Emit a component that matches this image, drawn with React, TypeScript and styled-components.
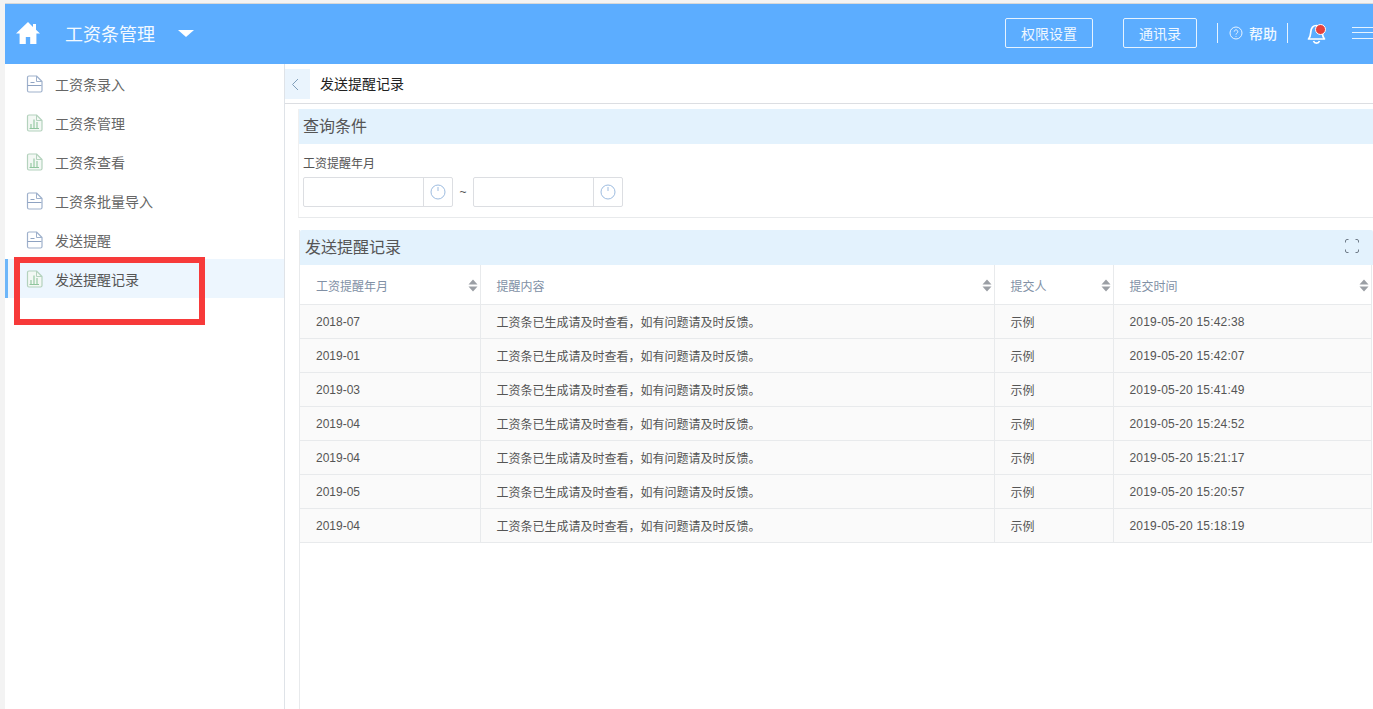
import React from "react";
import styled, { createGlobalStyle } from "styled-components";

const Global = createGlobalStyle`
  html, body { margin: 0; padding: 0; height: 100%; overflow: hidden; background: #fff; }
  body { font-family: "Liberation Sans", "Noto Sans CJK SC", sans-serif; }
  * { box-sizing: border-box; }
`;

const Page = styled.div`
  position: relative;
  width: 1373px;
  height: 709px;
  overflow: hidden;
  padding: 3px 0 0 5px;
  background: #f3f3f3;
  display: flex;
  flex-direction: column;
`;
const Header = styled.header`
  height: 61px;
  flex: none;
  background: #5cadff;
  border-top: 1px solid #d8d8d8;
  color: #fff;
  display: flex;
  align-items: center;
  padding: 0 0 2px 10px;
`;
const AppTitle = styled.span`
  font-size: 18px;
  margin-left: 24px;
  width: 112px;
  color: #f4faff;
`;
const Caret = styled.span`
  width: 0;
  height: 0;
  border-left: 8px solid transparent;
  border-right: 8px solid transparent;
  border-top: 7px solid #fff;
  margin-left: 1px;
`;
const Spacer = styled.div`
  flex: 1;
`;
const HeadButton = styled.button<{ $w: number; $mr: number }>`
  width: ${(p) => p.$w}px;
  height: 30px;
  margin-right: ${(p) => p.$mr}px;
  border: 1px solid #e6f3ff;
  border-radius: 2px;
  background: transparent;
  color: #f0f8ff;
  font: 14px "Liberation Sans", "Noto Sans CJK SC", sans-serif;
  padding: 0;
`;
const Rule = styled.span`
  width: 1px;
  height: 20px;
  background: #e6f3ff;
`;
const Help = styled.span`
  display: flex;
  align-items: center;
  gap: 6px;
  width: 69px;
  padding-left: 11px;
  font-size: 14px;
  font-weight: 500;
  color: #f0f8ff;
`;
const BellWrap = styled.span`
  position: relative;
  width: 19px;
  height: 20px;
  margin: 2px 26px 0 19px;
  display: block;
`;
const Dot = styled.span`
  position: absolute;
  top: 0;
  right: 0;
  width: 11px;
  height: 11px;
  border-radius: 50%;
  background: #e5413d;
  border: 1.5px solid #fff;
`;
const Burger = styled.span`
  width: 21px;
  height: 12px;
  flex: none;
  border-top: 1px solid #e6f3ff;
  border-bottom: 1px solid #e6f3ff;
  position: relative;
  &::after {
    content: "";
    position: absolute;
    left: 0;
    right: 0;
    top: 4px;
    height: 1px;
    background: #e6f3ff;
  }
`;
const Body = styled.div`
  flex: 1;
  min-height: 0;
  display: flex;
  background: #fff;
`;
const Sidebar = styled.nav`
  width: 280px;
  flex: none;
  border-right: 1px solid #dfe3e8;
  background: #fff;
`;
const MenuItem = styled.div<{ $active?: boolean }>`
  height: 39px;
  display: flex;
  align-items: center;
  padding: 1px 0 0 ${(p) => (p.$active ? 18 : 21)}px;
  gap: 12px;
  font-size: 14px;
  color: ${(p) => (p.$active ? "#555" : "#666")};
  background: ${(p) => (p.$active ? "#edf6fe" : "transparent")};
  border-left: ${(p) => (p.$active ? "3px solid #6db6f9" : "none")};
`;
const Main = styled.main`
  flex: 1;
  min-width: 0;
  display: flex;
  flex-direction: column;
`;
const Crumb = styled.div`
  height: 40px;
  flex: none;
  border-bottom: 1px solid #dcdee2;
  display: flex;
  align-items: center;
  gap: 10px;
  padding-bottom: 2px;
  font-size: 14px;
  color: #222;
`;
const Back = styled.span`
  width: 25px;
  height: 30px;
  margin-top: 5px;
  padding-right: 5px;
  align-self: flex-start;
  background: #eaf4fd;
  display: flex;
  align-items: center;
  justify-content: center;
`;
const QueryPanel = styled.section`
  margin: 5px 0 0 13px;
  height: 109px;
  flex: none;
  border-left: 1px solid #f0f0f0;
  border-bottom: 1px solid #e8eaec;
`;
const PanelHead = styled.div`
  height: 35px;
  background: #e3f2fd;
  display: flex;
  align-items: center;
  justify-content: space-between;
  padding-bottom: 3px;
  font-size: 16px;
  color: #555;
`;
const QueryHead = styled(PanelHead)`
  padding-left: 4px;
`;
const FieldLabel = styled.div`
  font-size: 12px;
  line-height: 16px;
  color: #555;
  margin: 12px 0 5px 4px;
`;
const RangeRow = styled.div`
  display: flex;
  align-items: center;
  margin-left: 4px;
`;
const DateBox = styled.div`
  width: 150px;
  height: 30px;
  border: 1px solid #dcdee2;
  border-radius: 2px;
  display: flex;
  justify-content: flex-end;
`;
const DateAddon = styled.span`
  width: 29px;
  border-left: 1px solid #dcdee2;
  display: flex;
  align-items: center;
  justify-content: center;
`;
const Tilde = styled.span`
  width: 20px;
  text-align: center;
  font-size: 12px;
  color: #555;
`;
const RecordPanel = styled.section`
  margin: 12px 0 0 14px;
  flex: 1;
  min-height: 0;
  border-left: 1px solid #e8eaec;
  display: flex;
  flex-direction: column;
`;
const RecordHead = styled(PanelHead)`
  padding: 0 14px 3px 5px;
  border-radius: 2px 2px 0 0;
  flex: none;
`;
const Table = styled.table`
  width: 1071px;
  border-collapse: collapse;
  table-layout: fixed;
  font-size: 12px;
`;
const Th = styled.th`
  height: 39px;
  padding: 2px 0 0 16px;
  font-weight: 400;
  text-align: left;
  color: #8190a5;
  background: #fff;
  border-bottom: 1px solid #e8eaec;
  border-right: 1px solid #e8eaec;
`;
const ThInner = styled.span`
  display: flex;
  align-items: center;
  justify-content: space-between;
  padding-right: 2px;
`;
const Td = styled.td`
  height: 34px;
  padding: 1px 0 0 16px;
  color: #555;
  background: #fafafa;
  border-bottom: 1px solid #e8eaec;
  border-right: 1px solid #e8eaec;
  white-space: nowrap;
`;
const Stamp = styled.span`
  letter-spacing: 0.2px;
`;
const Highlight = styled.div`
  position: absolute;
  left: 14px;
  top: 257px;
  width: 191px;
  height: 68px;
  border: 6px solid #f73a3a;
  pointer-events: none;
`;

const DocIcon = ({ chart }: { chart?: boolean }) => (
  <svg width="17" height="18" viewBox="0 0 17 18" fill="none">
    <path
      d="M3 1h7.500L16 6.500V15.500a1.500 1.500 0 0 1-1.500 1.500H3a1.500 1.500 0 0 1-1.500-1.500V2.500A1.500 1.500 0 0 1 3 1z"
      stroke={chart ? "#b4d2bd" : "#9fb1cc"}
      strokeWidth="1.2"
      strokeLinejoin="round"
      fill={chart ? "#f3f8f4" : "none"}
    />
    <path d="M10.500 1v5.500H16" stroke={chart ? "#b4d2bd" : "#9fb1cc"} strokeWidth="1" />
    {chart ? (
      <path d="M5 14V10M8 14V5.500M11 14V8M3.500 14.500h9.500" stroke="#8fc59d" strokeWidth="1.1" />
    ) : (
      <path d="M1.500 10.500h14M4.500 7.500h4" stroke="#8fa3c2" strokeWidth="1.1" />
    )}
  </svg>
);
const Clock = () => (
  <svg width="16" height="16" viewBox="0 0 16 16" fill="none">
    <circle cx="8" cy="8" r="7" stroke="#9dbce0" strokeWidth="1" />
    <path d="M8 3V7" stroke="#9dbce0" strokeWidth="1" />
  </svg>
);
const Sort = () => (
  <svg width="10" height="13" viewBox="0 0 10 13">
    <path d="M5 0.500L9.500 5.500H0.500Z M5 12.500L0.500 7.500H9.500Z" fill="#9b9fa5" />
  </svg>
);

const menu: [string, boolean][] = [
  ["工资条录入", false],
  ["工资条管理", true],
  ["工资条查看", true],
  ["工资条批量导入", false],
  ["发送提醒", false],
  ["发送提醒记录", true],
];
const rows = [
  ["2018-07", "2019-05-20 15:42:38"],
  ["2019-01", "2019-05-20 15:42:07"],
  ["2019-03", "2019-05-20 15:41:49"],
  ["2019-04", "2019-05-20 15:24:52"],
  ["2019-04", "2019-05-20 15:21:17"],
  ["2019-05", "2019-05-20 15:20:57"],
  ["2019-04", "2019-05-20 15:18:19"],
];

export default function App() {
  return (
    <Page>
      <Global />
      <Header>
        <svg width="26" height="24" viewBox="0 0 26 24">
          <path d="M13 1L1 12.500h3.600V23h6.200v-7h4.400v7h6.200V12.500H25L21 8.700V3h-3v2.900z" fill="#fff" />
        </svg>
        <AppTitle>工资条管理</AppTitle>
        <Caret />
        <Spacer />
        <HeadButton $w={88} $mr={30}>权限设置</HeadButton>
        <HeadButton $w={74} $mr={20}>通讯录</HeadButton>
        <Rule />
        <Help>
          <svg width="14" height="14" viewBox="0 0 14 14" fill="none">
            <circle cx="7" cy="7" r="6" stroke="#e6f3ff" />
            <path d="M5.200 5.600a1.800 1.800 0 1 1 2.700 1.600c-.6.400-.9.700-.9 1.400M7 10v.8" stroke="#e6f3ff" />
          </svg>
          帮助
        </Help>
        <Rule />
        <BellWrap>
          <svg width="19" height="20" viewBox="0 0 19 20" fill="none">
            <path
              d="M1.500 15c2-2 2-3.500 2.300-7C4.100 4 6.500 1.500 9.500 1.500s5.400 2.500 5.700 6.500c.3 3.500.3 5 2.300 7z"
              stroke="#fff"
              strokeWidth="1.700"
              strokeLinejoin="round"
            />
            <path d="M6.500 17a3.200 3.200 0 0 0 6 0" stroke="#fff" strokeWidth="1.700" />
          </svg>
          <Dot />
        </BellWrap>
        <Burger />
      </Header>
      <Body>
        <Sidebar>
          {menu.map(([label, chart], i) => (
            <MenuItem key={label} $active={i === 5}>
              <DocIcon chart={chart} />
              {label}
            </MenuItem>
          ))}
        </Sidebar>
        <Main>
          <Crumb>
            <Back>
              <svg width="8" height="13" viewBox="0 0 8 13" fill="none">
                <path d="M7 1L1.500 6.500L7 12" stroke="#7f9db9" />
              </svg>
            </Back>
            发送提醒记录
          </Crumb>
          <QueryPanel>
            <QueryHead>查询条件</QueryHead>
            <FieldLabel>工资提醒年月</FieldLabel>
            <RangeRow>
              <DateBox>
                <DateAddon><Clock /></DateAddon>
              </DateBox>
              <Tilde>~</Tilde>
              <DateBox>
                <DateAddon><Clock /></DateAddon>
              </DateBox>
            </RangeRow>
          </QueryPanel>
          <RecordPanel>
            <RecordHead>
              发送提醒记录
              <svg width="14" height="14" viewBox="0 0 14 14" fill="none">
                <path
                  d="M.5 3.500V2A1.500 1.500 0 0 1 2 .5h1.500M10.500 .5H12A1.500 1.500 0 0 1 13.500 2v1.500M13.500 10.500V12a1.500 1.500 0 0 1-1.500 1.500h-1.500M3.500 13.500H2A1.500 1.500 0 0 1 .5 12v-1.500"
                  stroke="#6f7b88"
                />
              </svg>
            </RecordHead>
            <Table>
              <colgroup>
                <col width={180} />
                <col width={514} />
                <col width={119} />
                <col width={258} />
              </colgroup>
              <thead>
                <tr>
                  {["工资提醒年月", "提醒内容", "提交人", "提交时间"].map((h) => (
                    <Th key={h}>
                      <ThInner>
                        {h}
                        <Sort />
                      </ThInner>
                    </Th>
                  ))}
                </tr>
              </thead>
              <tbody>
                {rows.map(([month, time], i) => (
                  <tr key={i}>
                    <Td>{month}</Td>
                    <Td>工资条已生成请及时查看，如有问题请及时反馈。</Td>
                    <Td>示例</Td>
                    <Td><Stamp>{time}</Stamp></Td>
                  </tr>
                ))}
              </tbody>
            </Table>
          </RecordPanel>
        </Main>
      </Body>
      <Highlight />
    </Page>
  );
}
